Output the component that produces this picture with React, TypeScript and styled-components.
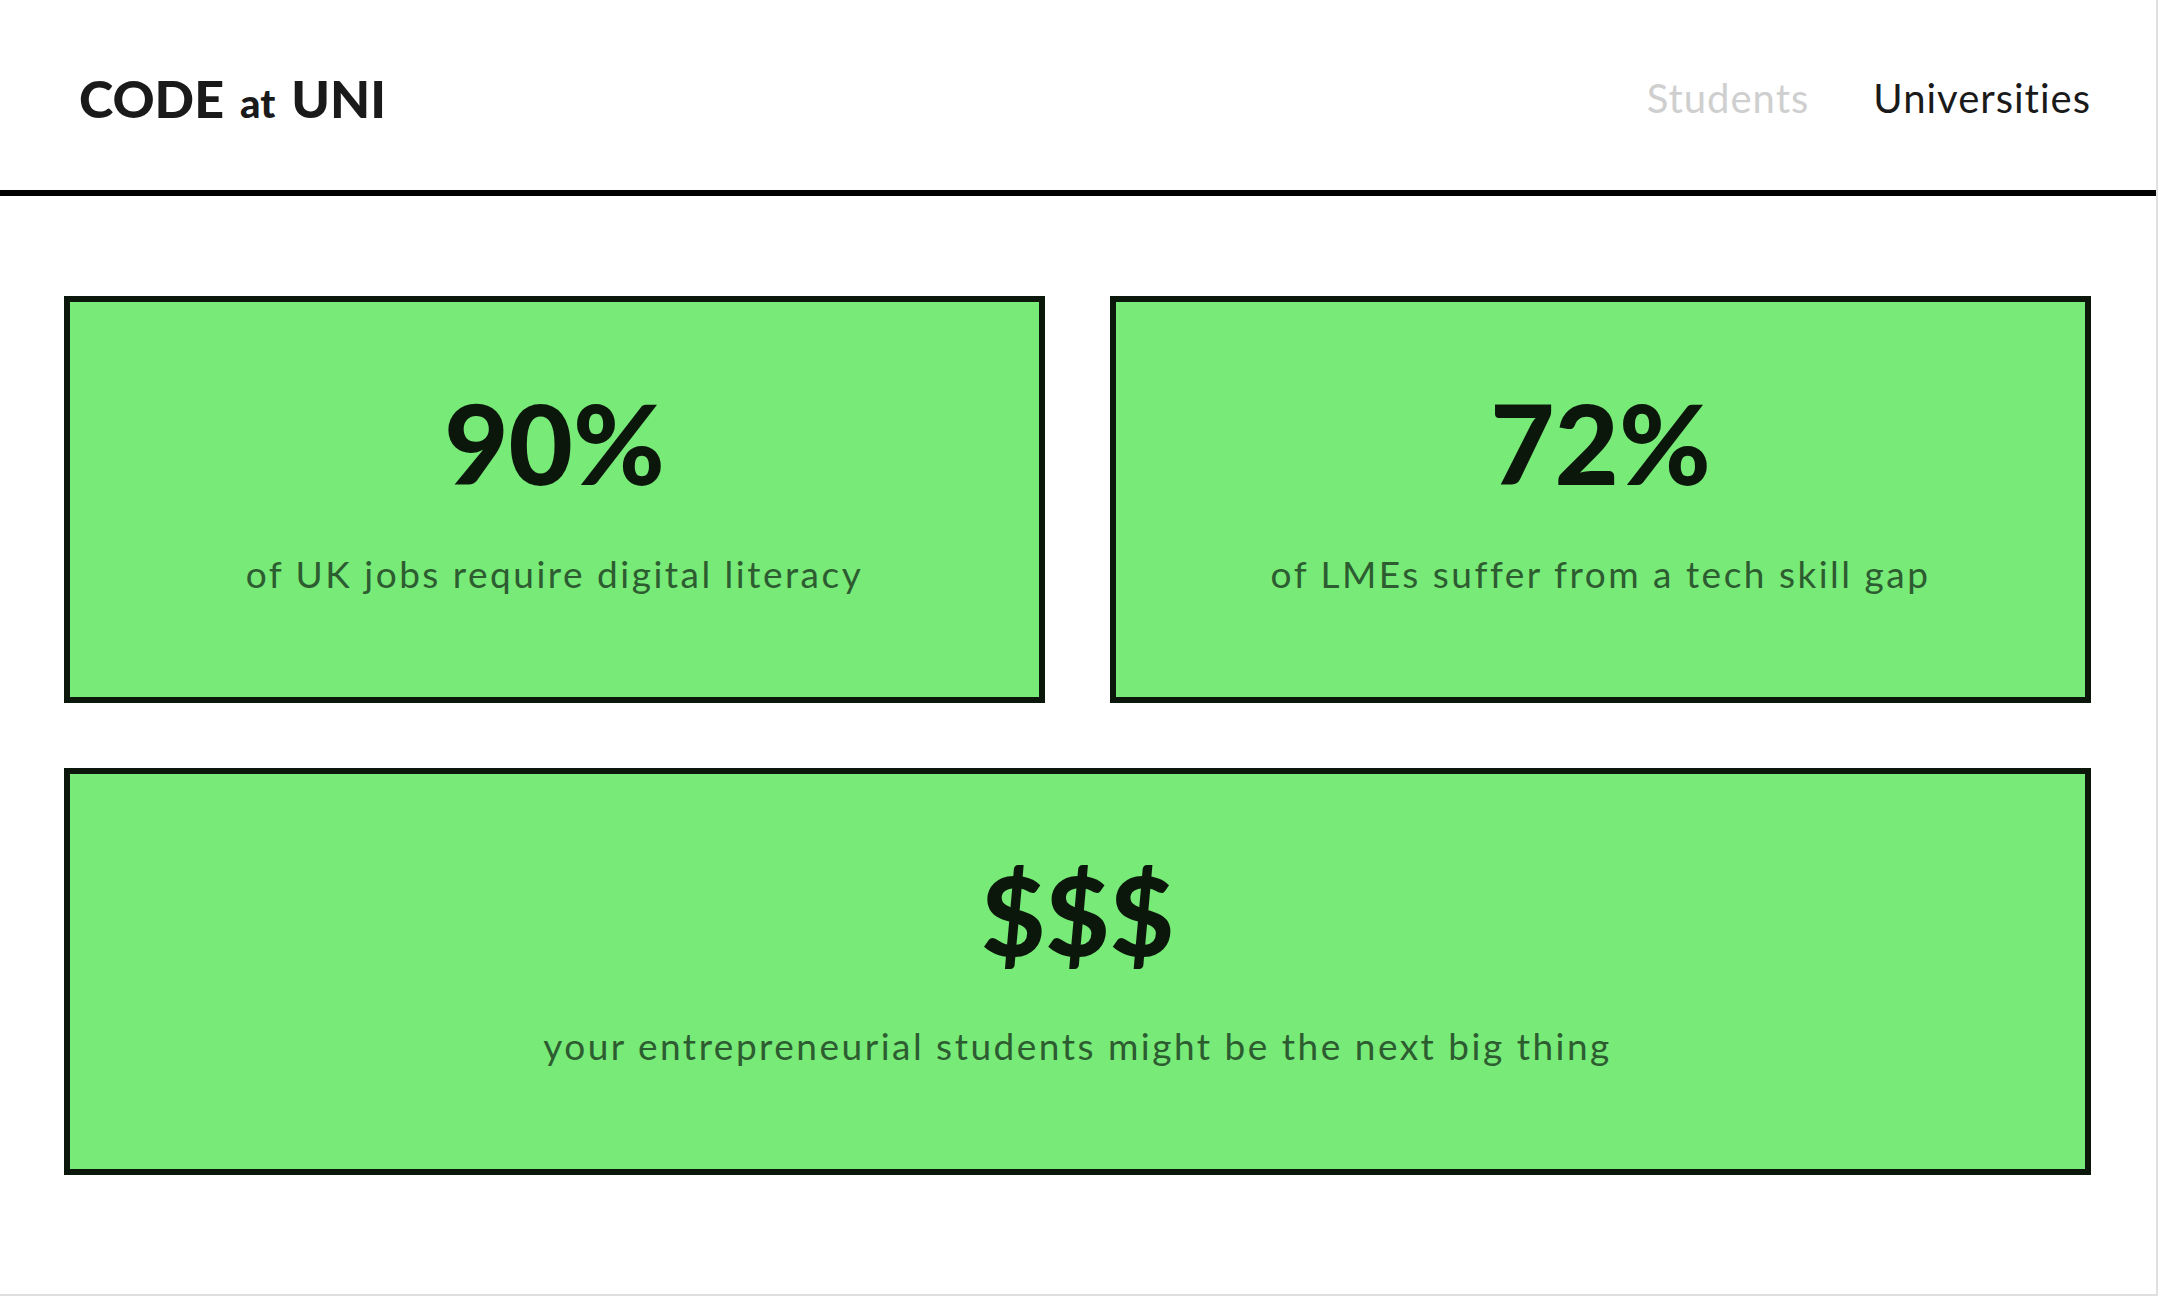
import React from "react";
import styled, { createGlobalStyle } from "styled-components";

const GlobalStyle = createGlobalStyle`
  html, body {
    margin: 0;
    padding: 0;
    background: #ffffff;
    overflow: hidden;
  }
  body {
    font-family: Lato, "Open Sans", "Liberation Sans", sans-serif;
    color: #1a1a1a;
  }
`;

const Frame = styled.div`
  box-sizing: border-box;
  width: 2158px;
  height: 1296px;
  border-right: 2px solid #e0e0e0;
  border-bottom: 2px solid #e0e0e0;
  background: #ffffff;
`;

const Header = styled.header`
  box-sizing: border-box;
  height: 196px;
  display: flex;
  align-items: center;
  justify-content: space-between;
  padding: 5px 65px 0 79px;
  border-bottom: 6px solid #000000;
`;

const Logo = styled.div`
  display: flex;
  align-items: baseline;
  gap: 16px;
  font-weight: 900;
  font-size: 52px;
  line-height: 1;
  color: #1a1a1a;
`;

const LogoSmall = styled.span`
  font-size: 40px;
  font-weight: 900;
`;

const Nav = styled.nav`
  display: flex;
  align-items: center;
  gap: 64px;
`;

const NavLink = styled.a<{ $active?: boolean }>`
  font-size: 40px;
  font-weight: 400;
  letter-spacing: 1px;
  text-decoration: none;
  color: ${(p) => (p.$active ? "#1a1a1a" : "#cfcfcf")};
  cursor: pointer;
`;

const Grid = styled.main`
  display: grid;
  grid-template-columns: 1fr 1fr;
  gap: 65px;
  padding: 100px 65px 0 64px;
`;

const StatCard = styled.section<{ $wide?: boolean }>`
  box-sizing: border-box;
  grid-column: ${(p) => (p.$wide ? "1 / -1" : "auto")};
  height: 407px;
  background: #77ea77;
  border: 6px solid #0c170c;
  display: flex;
  flex-direction: column;
  align-items: center;
  justify-content: center;
  gap: 54px;
  padding-bottom: 16px;
`;

const Figure = styled.div`
  font-size: 111px;
  font-weight: 900;
  line-height: 1;
  color: #0c170c;
`;

const Caption = styled.p`
  margin: 0;
  font-size: 37px;
  font-weight: 400;
  letter-spacing: 2.5px;
  line-height: 1.2;
  color: #2d5c31;
`;

const stats = [
  { figure: "90%", caption: "of UK jobs require digital literacy" },
  { figure: "72%", caption: "of LMEs suffer from a tech skill gap" },
  {
    figure: "$$$",
    caption: "your entrepreneurial students might be the next big thing",
    wide: true,
  },
];

export default function App() {
  return (
    <>
      <GlobalStyle />
      <Frame>
        <Header>
          <Logo>
            <span>CODE</span>
            <LogoSmall>at</LogoSmall>
            <span>UNI</span>
          </Logo>
          <Nav>
            <NavLink>Students</NavLink>
            <NavLink $active>Universities</NavLink>
          </Nav>
        </Header>
        <Grid>
          {stats.map((s) => (
            <StatCard key={s.figure} $wide={s.wide}>
              <Figure>{s.figure}</Figure>
              <Caption>{s.caption}</Caption>
            </StatCard>
          ))}
        </Grid>
      </Frame>
    </>
  );
}
